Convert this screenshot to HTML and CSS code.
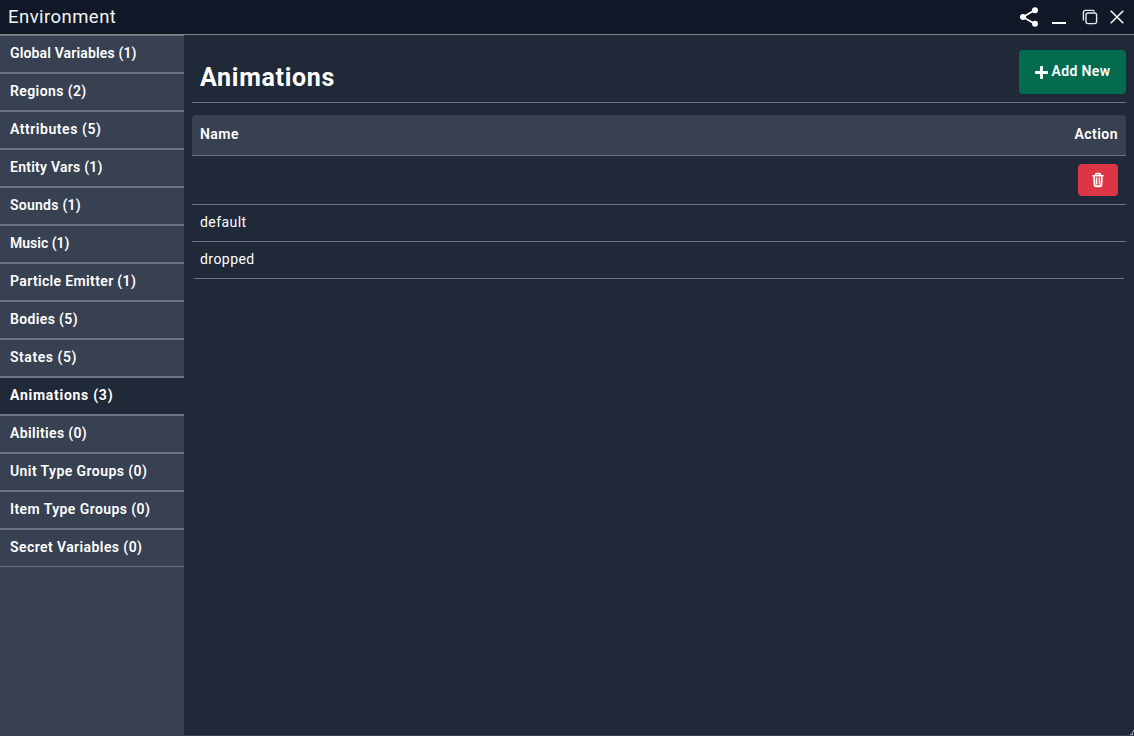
FILE: index.html
```html
<!DOCTYPE html>
<html lang="en">
<head>
<meta charset="utf-8">
<title>Environment</title>
<link rel="stylesheet" href="styles.css">
</head>
<body>
<div class="window">
  <header class="titlebar">
    <h1 class="window-title">Environment</h1>
    <div class="controls">
      <svg class="share" width="20" height="20" viewBox="0 0 20 20"><path d="M16 3 4 10l12 7" fill="none" stroke="#fff" stroke-width="1.8"/><circle cx="16" cy="3.2" r="3" fill="#fff"/><circle cx="4" cy="10" r="3" fill="#fff"/><circle cx="16" cy="16.8" r="3" fill="#fff"/></svg>
      <svg class="minimize" width="14" height="20" viewBox="0 0 14 20"><path d="M0 15h14v2H0z" fill="#fff"/></svg>
      <svg class="restore" width="16" height="16" viewBox="0 0 16 16" fill="none" stroke="#e5e7eb" stroke-width="1.4"><rect x="4" y="4" width="10.6" height="10.6" rx="2"/><path d="M1.4 11.4V3.6q0-2.2 2.2-2.2h7.3q1.2 0 1.5 1.2"/></svg>
      <svg class="close" width="14" height="14" viewBox="0 0 14 14"><path d="m.7.7 12.6 12.6M13.3.7.7 13.3" fill="none" stroke="#fff" stroke-width="1.5"/></svg>
    </div>
  </header>
  <div class="body">
    <nav class="sidebar">
      <a class="item snug">Global Variables (1)</a>
      <a class="item regions">Regions (2)</a>
      <a class="item loose">Attributes (5)</a>
      <a class="item">Entity Vars (1)</a>
      <a class="item">Sounds (1)</a>
      <a class="item tight">Music (1)</a>
      <a class="item medium">Particle Emitter (1)</a>
      <a class="item medium">Bodies (5)</a>
      <a class="item loose">States (5)</a>
      <a class="item active">Animations (3)</a>
      <a class="item medium">Abilities (0)</a>
      <a class="item wide">Unit Type Groups (0)</a>
      <a class="item wide">Item Type Groups (0)</a>
      <a class="item wide">Secret Variables (0)</a>
    </nav>
    <main class="content">
      <div class="heading">
        <h2 class="title">Animations</h2>
        <button class="add"><svg width="13" height="13" viewBox="0 0 13 13"><path d="M6.5.9v11.2M.9 6.5h11.2" stroke="#fff" stroke-width="2.8" stroke-linecap="round"/></svg><span class="add-label">Add New</span></button>
      </div>
      <div class="table">
        <div class="row head"><span>Name</span><span>Action</span></div>
        <div class="row tall"><span></span><button class="delete"><svg width="12" height="16" viewBox="0 0 12 16" fill="none" stroke="#fff"><path d="M1 3.7h10M3.6 3.3v-.7q0-1 1-1h2.8q1 0 1 1v.7" stroke-width="1.6" stroke-linecap="round"/><path d="M2.1 4.2 2.6 13q.1 1.3 1.4 1.3h4q1.3 0 1.4-1.3l.5-8.8" stroke-width="1.9"/><path d="M4.7 5.6v7M7.3 5.6v7" stroke-width="1.3"/></svg></button></div>
        <div class="row"><span>default</span></div>
        <div class="row last"><span>dropped</span></div>
      </div>
    </main>
  </div>
  <svg class="grip" width="4" height="5" viewBox="0 0 4 5"><path d="M3 0h1v2H3zM2 2h1v1H2zM0 4h2V3h1v2H0z" fill="#9ca3af"/></svg>
</div>
</body>
</html>
```
FILE: styles.css
```css
* { box-sizing: border-box; }
body { margin: 0; background: #111827; color: #fff; font: 500 14px/20px Roboto, sans-serif; }
svg { display: block; }
button { border: 0; color: #fff; font: inherit; padding: 0; }
.window { position: relative; width: 1134px; height: 736px; display: flex; flex-direction: column; border-bottom: 1px solid #374151; overflow: hidden; border-top-right-radius: 4px; }
.titlebar { height: 35px; flex: none; display: flex; justify-content: space-between; padding: 0 10px 0 8px; border-bottom: 1px solid #858585; background: #111827; }
.window-title { margin: 0; font-size: 18.5px; line-height: 34px; font-weight: 400; letter-spacing: .45px; color: #f3f4f6; }
.controls { display: flex; align-items: center; }
.minimize { margin-left: 13px; }
.restore { margin-left: 16px; }
.close { margin-left: 12px; }
.body { flex: 1; display: flex; background: #1f2937; }
.sidebar { width: 184px; background: #374151; }
.item { display: block; height: 38px; padding: 7px 10px; border: solid #6b7280; border-width: 1px 0; font-weight: 600; letter-spacing: .25px; white-space: nowrap; }
.tight { letter-spacing: 0; }
.snug { letter-spacing: .15px; }
.medium { letter-spacing: .36px; }
.regions { letter-spacing: .4px; }
.wide { letter-spacing: .42px; }
.loose { letter-spacing: .55px; }
.active { background: #1f2937; font-weight: 700; letter-spacing: .73px; }
.content { flex: 1; padding: 15px 8px; }
.heading { height: 53px; display: flex; justify-content: space-between; border-bottom: 1px solid #6b7280; padding-left: 8px; }
.title { margin: 12px 0 0; font-size: 25px; line-height: 32px; font-weight: 700; letter-spacing: .7px; }
.add { width: 107px; height: 44px; border-radius: 4px; background: #046c4e; display: flex; align-items: center; justify-content: center; gap: 4px; font-weight: 600; letter-spacing: .35px; }
.add-label { padding-bottom: 2px; }
.table { margin-top: 12px; }
.row { height: 37px; display: flex; align-items: center; justify-content: space-between; padding: 0 8px 2px; border-bottom: 1px solid #6b7280; font-weight: 400; letter-spacing: .45px; }
.head { height: 41px; background: #374151; border-radius: 4px 4px 0 0; font-weight: 600; }
.tall { height: 49px; padding-bottom: 0; }
.last { margin: 0 2px; padding: 0 6px 2px; }
.delete { width: 40px; height: 32px; border-radius: 4px; background: #dc3545; display: grid; place-items: center; }
.grip { position: absolute; right: 0; bottom: 0; }
```
